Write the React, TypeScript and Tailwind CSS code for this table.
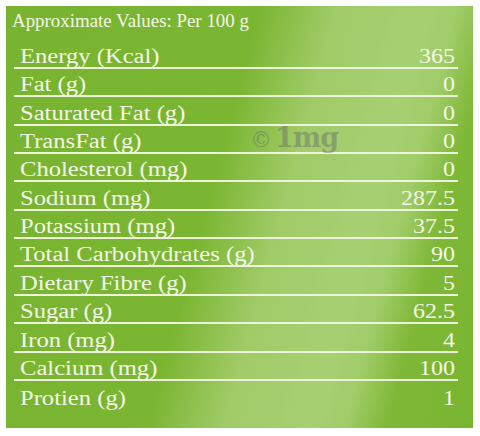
const rows: [string, string][] = [
  ['Energy (Kcal)', '365'],
  ['Fat (g)', '0'],
  ['Saturated Fat (g)', '0'],
  ['TransFat (g)', '0'],
  ['Cholesterol (mg)', '0'],
  ['Sodium (mg)', '287.5'],
  ['Potassium (mg)', '37.5'],
  ['Total Carbohydrates (g)', '90'],
  ['Dietary Fibre (g)', '5'],
  ['Sugar (g)', '62.5'],
  ['Iron (mg)', '4'],
  ['Calcium (mg)', '100'],
  ['Protien (g)', '1'],
]

export default function App() {
  return (
    <div className="w-[480px] h-[436px] bg-white pt-[6px] pl-[6px]">
      <div
        className="relative w-[467px] h-[422px] bg-[linear-gradient(105deg,#78b42f_0%,#7bb633_44%,#a0cb67_57%,#a7d073_72%,#a0cc69_78%,#7fb837_85%,#79b531_100%)] text-[#f4f7e8] font-['Liberation_Serif',serif]"
      >
        {/* header */}
        <div className="h-[34.6px] pl-[6px] pt-[4px] text-[18px] leading-[22px]">
          <span className="inline-block origin-left scale-x-[1.05]">Approximate Values: Per 100 g</span>
        </div>

        {/* rows */}
        <div className="ml-[8px] mr-[15px]">
          {rows.map(([label, value], i) => (
            <div
              key={label}
              className={
                'flex items-end justify-between h-[28.36px] pl-[6px] pr-[3px] pb-[1px] text-[20px] leading-[20px] ' +
                (i < rows.length - 1 ? 'border-b-2 border-[#eef4dc]' : '')
              }
            >
              <span className="inline-block origin-left scale-x-[1.23] whitespace-nowrap">{label}</span>
              <span className="inline-block origin-right scale-x-[1.2]">{value}</span>
            </div>
          ))}
        </div>

        {/* watermark */}
        <div className="absolute left-[244px] top-[112px] flex items-baseline text-[rgba(110,115,105,0.5)] font-['DejaVu_Serif',serif] font-bold">
          <span className="text-[22px] font-normal mr-[3px]">©</span>
          <span className="text-[27px] tracking-[-1px]">1mg</span>
        </div>
      </div>
    </div>
  )
}
